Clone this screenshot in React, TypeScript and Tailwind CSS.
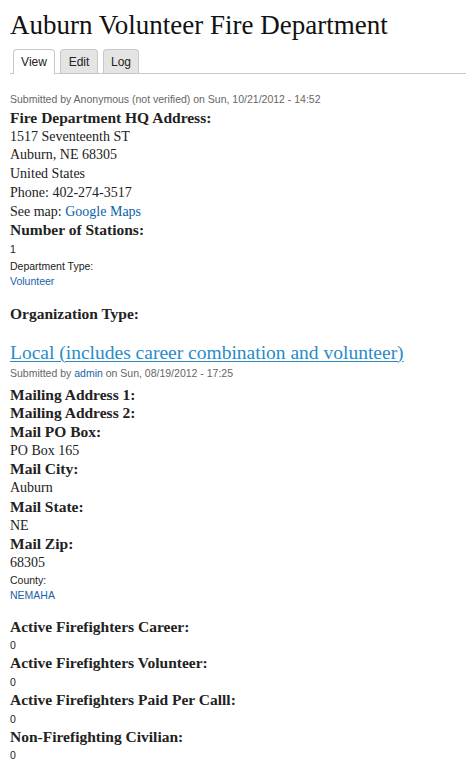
const serif = { fontFamily: '"Liberation Serif", Georgia, serif' };

const Label = ({ children }: { children: React.ReactNode }) => (
  <div className="font-bold text-[15.5px] leading-[18.7px] text-[#222]">{children}</div>
);

const Value = ({ children }: { children: React.ReactNode }) => (
  <div className="text-[14px] leading-[18.7px] text-[#222]">{children}</div>
);

const Small = ({ children, className = "" }: { children: React.ReactNode; className?: string }) => (
  <div className={`font-['Liberation_Sans',Arial,sans-serif] text-[10.5px] leading-[15px] ${className}`}>{children}</div>
);

export default function App() {
  return (
    <div className="min-h-screen bg-white pl-[10px] pr-2 font-['Liberation_Serif',Georgia,serif]" style={serif}>
      {/* Title */}
      <h1 className="pt-[9px] text-[27px] leading-[32px] text-[#111]">Auburn Volunteer Fire Department</h1>

      {/* Tabs */}
      <div className="mt-[8px] -mr-2 flex items-end gap-[5px] border-b border-[#c8c8c8] pl-[3px] font-['Liberation_Sans',Arial,sans-serif] text-[12px]">
        <div className="-mb-px flex h-[25px] w-[42px] items-center justify-center rounded-t-[4px] border border-b-0 border-[#c8c8c8] bg-white text-[#222]">
          View
        </div>
        <div className="flex h-[24px] w-[38px] items-center justify-center rounded-t-[4px] border border-b-0 border-[#c8c8c8] bg-[#e4e4e4] text-[#222]">
          Edit
        </div>
        <div className="flex h-[24px] w-[36px] items-center justify-center rounded-t-[4px] border border-b-0 border-[#c8c8c8] bg-[#e4e4e4] text-[#222]">
          Log
        </div>
      </div>

      {/* Main node */}
      <Small className="mt-[18px] text-[#666]">
        Submitted by Anonymous (not verified) on Sun, 10/21/2012 - 14:52
      </Small>
      <div className="mt-[2px]">
        <Label>Fire Department HQ Address:</Label>
        <Value>1517 Seventeenth ST</Value>
        <Value>Auburn, NE 68305</Value>
        <Value>United States</Value>
        <Value>Phone: 402-274-3517</Value>
        <Value>
          See map: <a className="text-[#0b5fa5]">Google Maps</a>
        </Value>
        <Label>Number of Stations:</Label>
      </div>
      <Small className="mt-[2px] text-[#222]">1</Small>
      <Small className="mt-[2px] text-[#222]">Department Type:</Small>
      <Small className="text-[#1a5fa8]">Volunteer</Small>

      <div className="mt-[16px]">
        <Label>Organization Type:</Label>
      </div>

      {/* Referenced node */}
      <h2 className="mt-[17px] text-[19.5px] leading-[24px] text-[#2a8bc7] underline decoration-1 underline-offset-2">
        Local (includes career combination and volunteer)
      </h2>
      <Small className="mt-[1px] text-[#666]">
        Submitted by <a className="text-[#1a5fa8]">admin</a> on Sun, 08/19/2012 - 17:25
      </Small>
      <div className="mt-[5px]">
        <Label>Mailing Address 1:</Label>
        <Label>Mailing Address 2:</Label>
        <Label>Mail PO Box:</Label>
        <Value>PO Box 165</Value>
        <Label>Mail City:</Label>
        <Value>Auburn</Value>
        <Label>Mail State:</Label>
        <Value>NE</Value>
        <Label>Mail Zip:</Label>
        <Value>68305</Value>
      </div>
      <Small className="text-[#222]">County:</Small>
      <Small className="text-[#1a5fa8]">NEMAHA</Small>

      <div className="mt-[15px]">
        <Label>Active Firefighters Career:</Label>
        <Small className="mt-[2px] mb-px text-[#222]">0</Small>
        <Label>Active Firefighters Volunteer:</Label>
        <Small className="mt-[2px] mb-px text-[#222]">0</Small>
        <Label>Active Firefighters Paid Per Calll:</Label>
        <Small className="mt-[2px] mb-px text-[#222]">0</Small>
        <Label>Non-Firefighting Civilian:</Label>
        <Small className="mt-[2px] text-[#222]">0</Small>
      </div>
    </div>
  );
}
